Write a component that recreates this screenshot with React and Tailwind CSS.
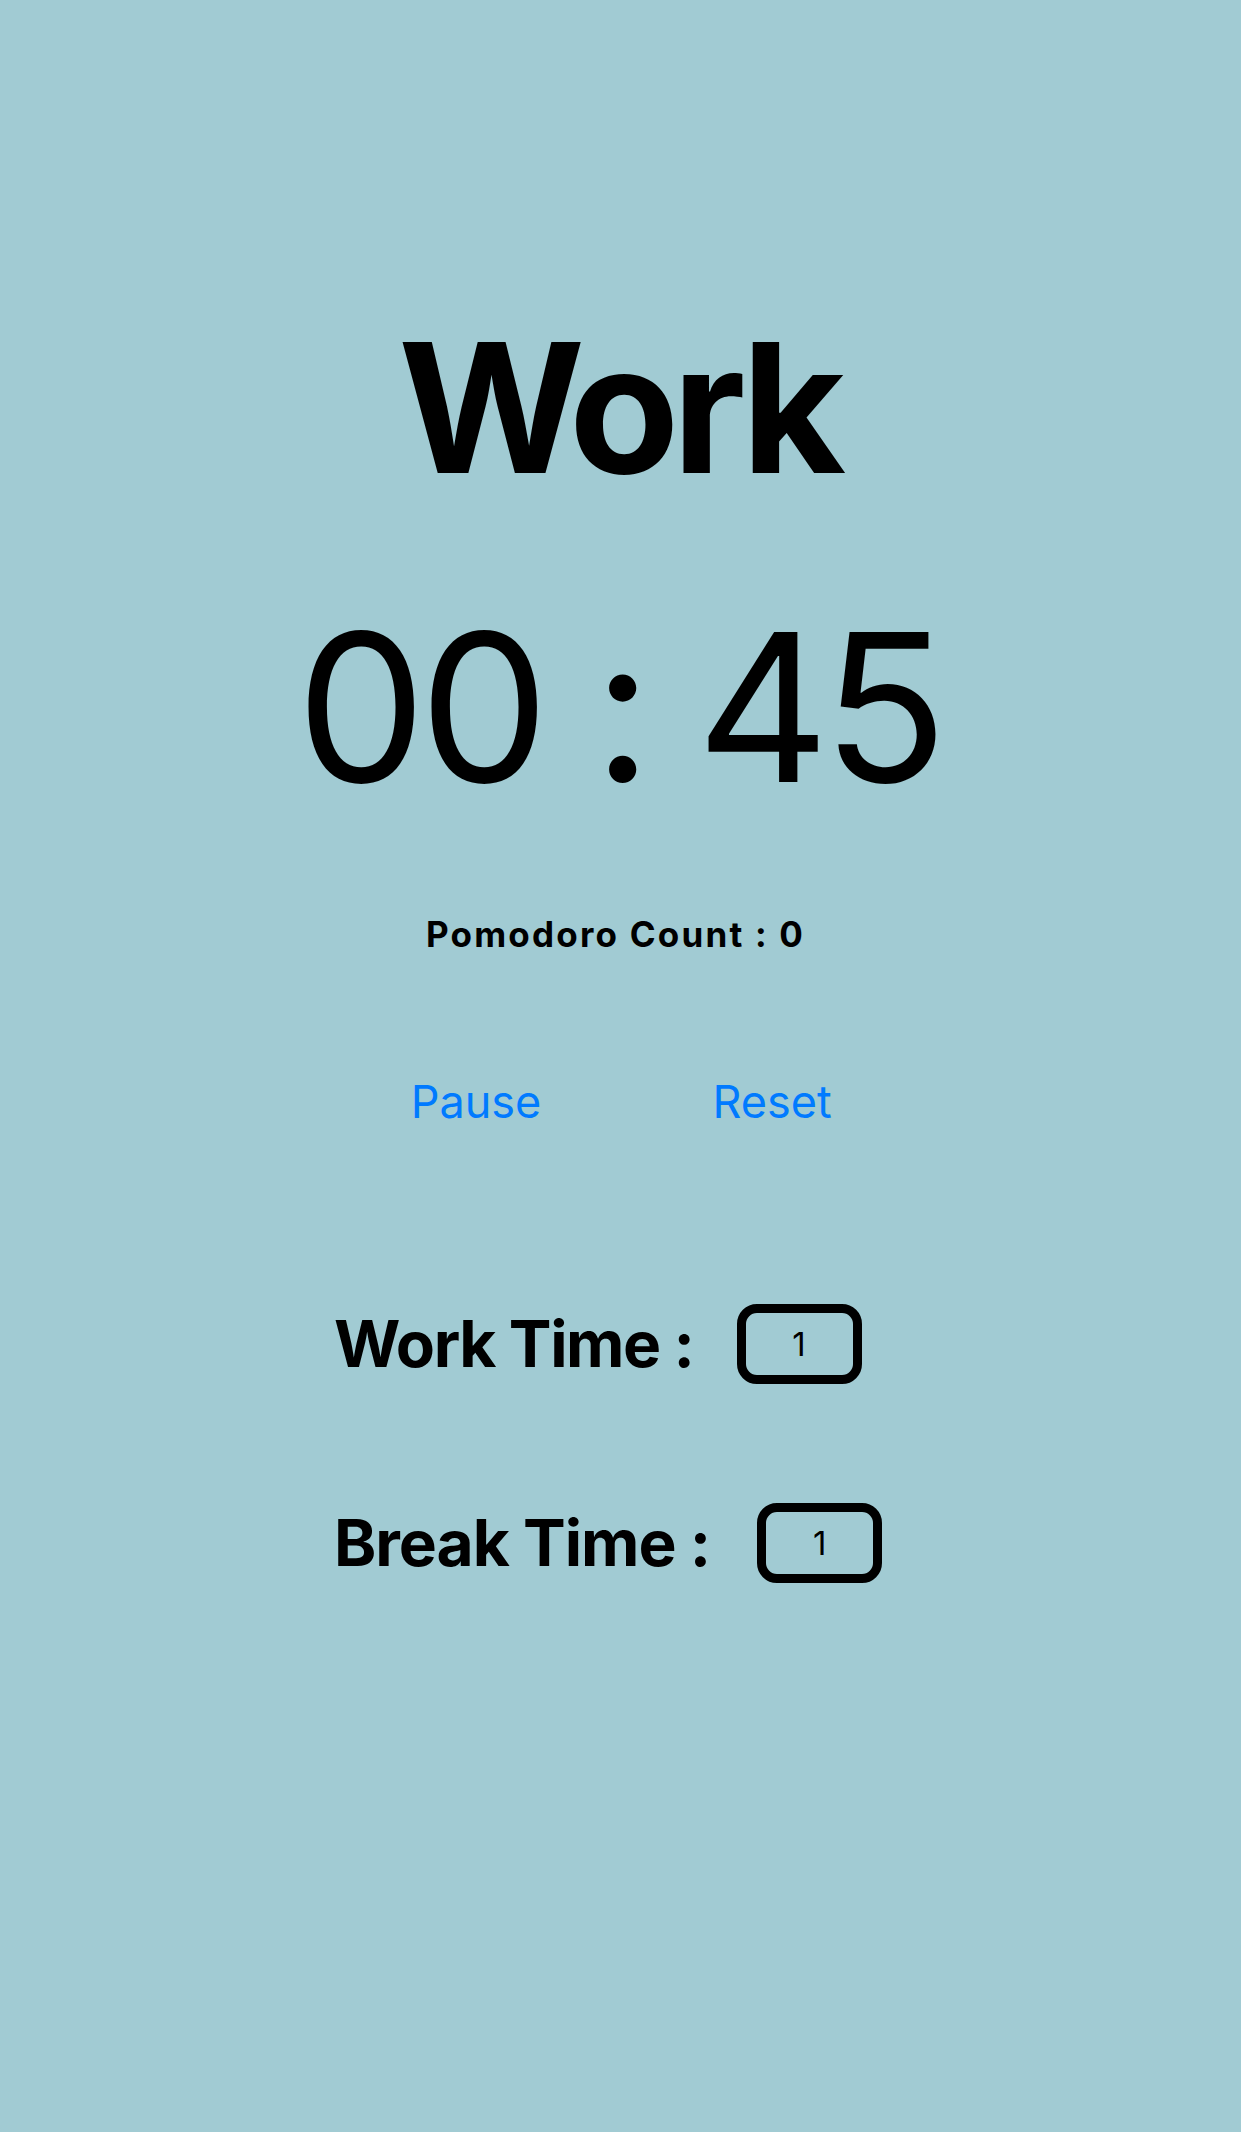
import React, { useState } from 'react';

const TimeField = ({ label, value, onChange, wide }) => {
    return (
        <div className={`flex items-center ${wide ? 'gap-[47px]' : 'gap-[43px]'}`}>
            <span className={`text-[64px] leading-none font-bold text-black ${wide ? 'tracking-[-1px]' : 'tracking-[-1.4px]'}`}>{label}</span>
            <input
                type="text"
                value={value}
                onChange={(e) => onChange(e.target.value)}
                className="w-[125px] h-[80px] border-[9px] border-black rounded-[20px] bg-transparent text-center text-[33px] text-black outline-none"
            />
        </div>
    );
};

const App = () => {
    const [workTime, setWorkTime] = useState('1');
    const [breakTime, setBreakTime] = useState('1');
    const [count] = useState(0);

    return (
        <div className="min-h-screen bg-[#a1cbd3] font-['Inter','Noto_Sans',sans-serif] text-black">
            <div className="flex flex-col items-center pt-[318px]">
                <h1 className="text-[180px] leading-none font-bold tracking-[-7px] pr-[4px]">Work</h1>

                <div className="mt-[106px] text-[206px] leading-none font-normal tracking-[-7px] pr-[4px]">00 : 45</div>

                <p className="mt-[107px] text-[35px] leading-none font-bold tracking-[2.2px] pr-[10px]">Pomodoro Count : {count}</p>

                <div className="mt-[127px] flex justify-center pl-[7px]">
                    <button className="w-[296px] text-center text-[45px] leading-none text-[#007aff]">Pause</button>
                    <button className="w-[296px] text-center text-[45px] leading-none text-[#007aff]">Reset</button>
                </div>
            </div>

            <div className="mt-[180px] ml-[334px] flex flex-col gap-[119px]">
                <TimeField label="Work Time :" value={workTime} onChange={setWorkTime} />
                <TimeField label="Break Time :" value={breakTime} onChange={setBreakTime} wide />
            </div>
        </div>
    );
};

export default App;
